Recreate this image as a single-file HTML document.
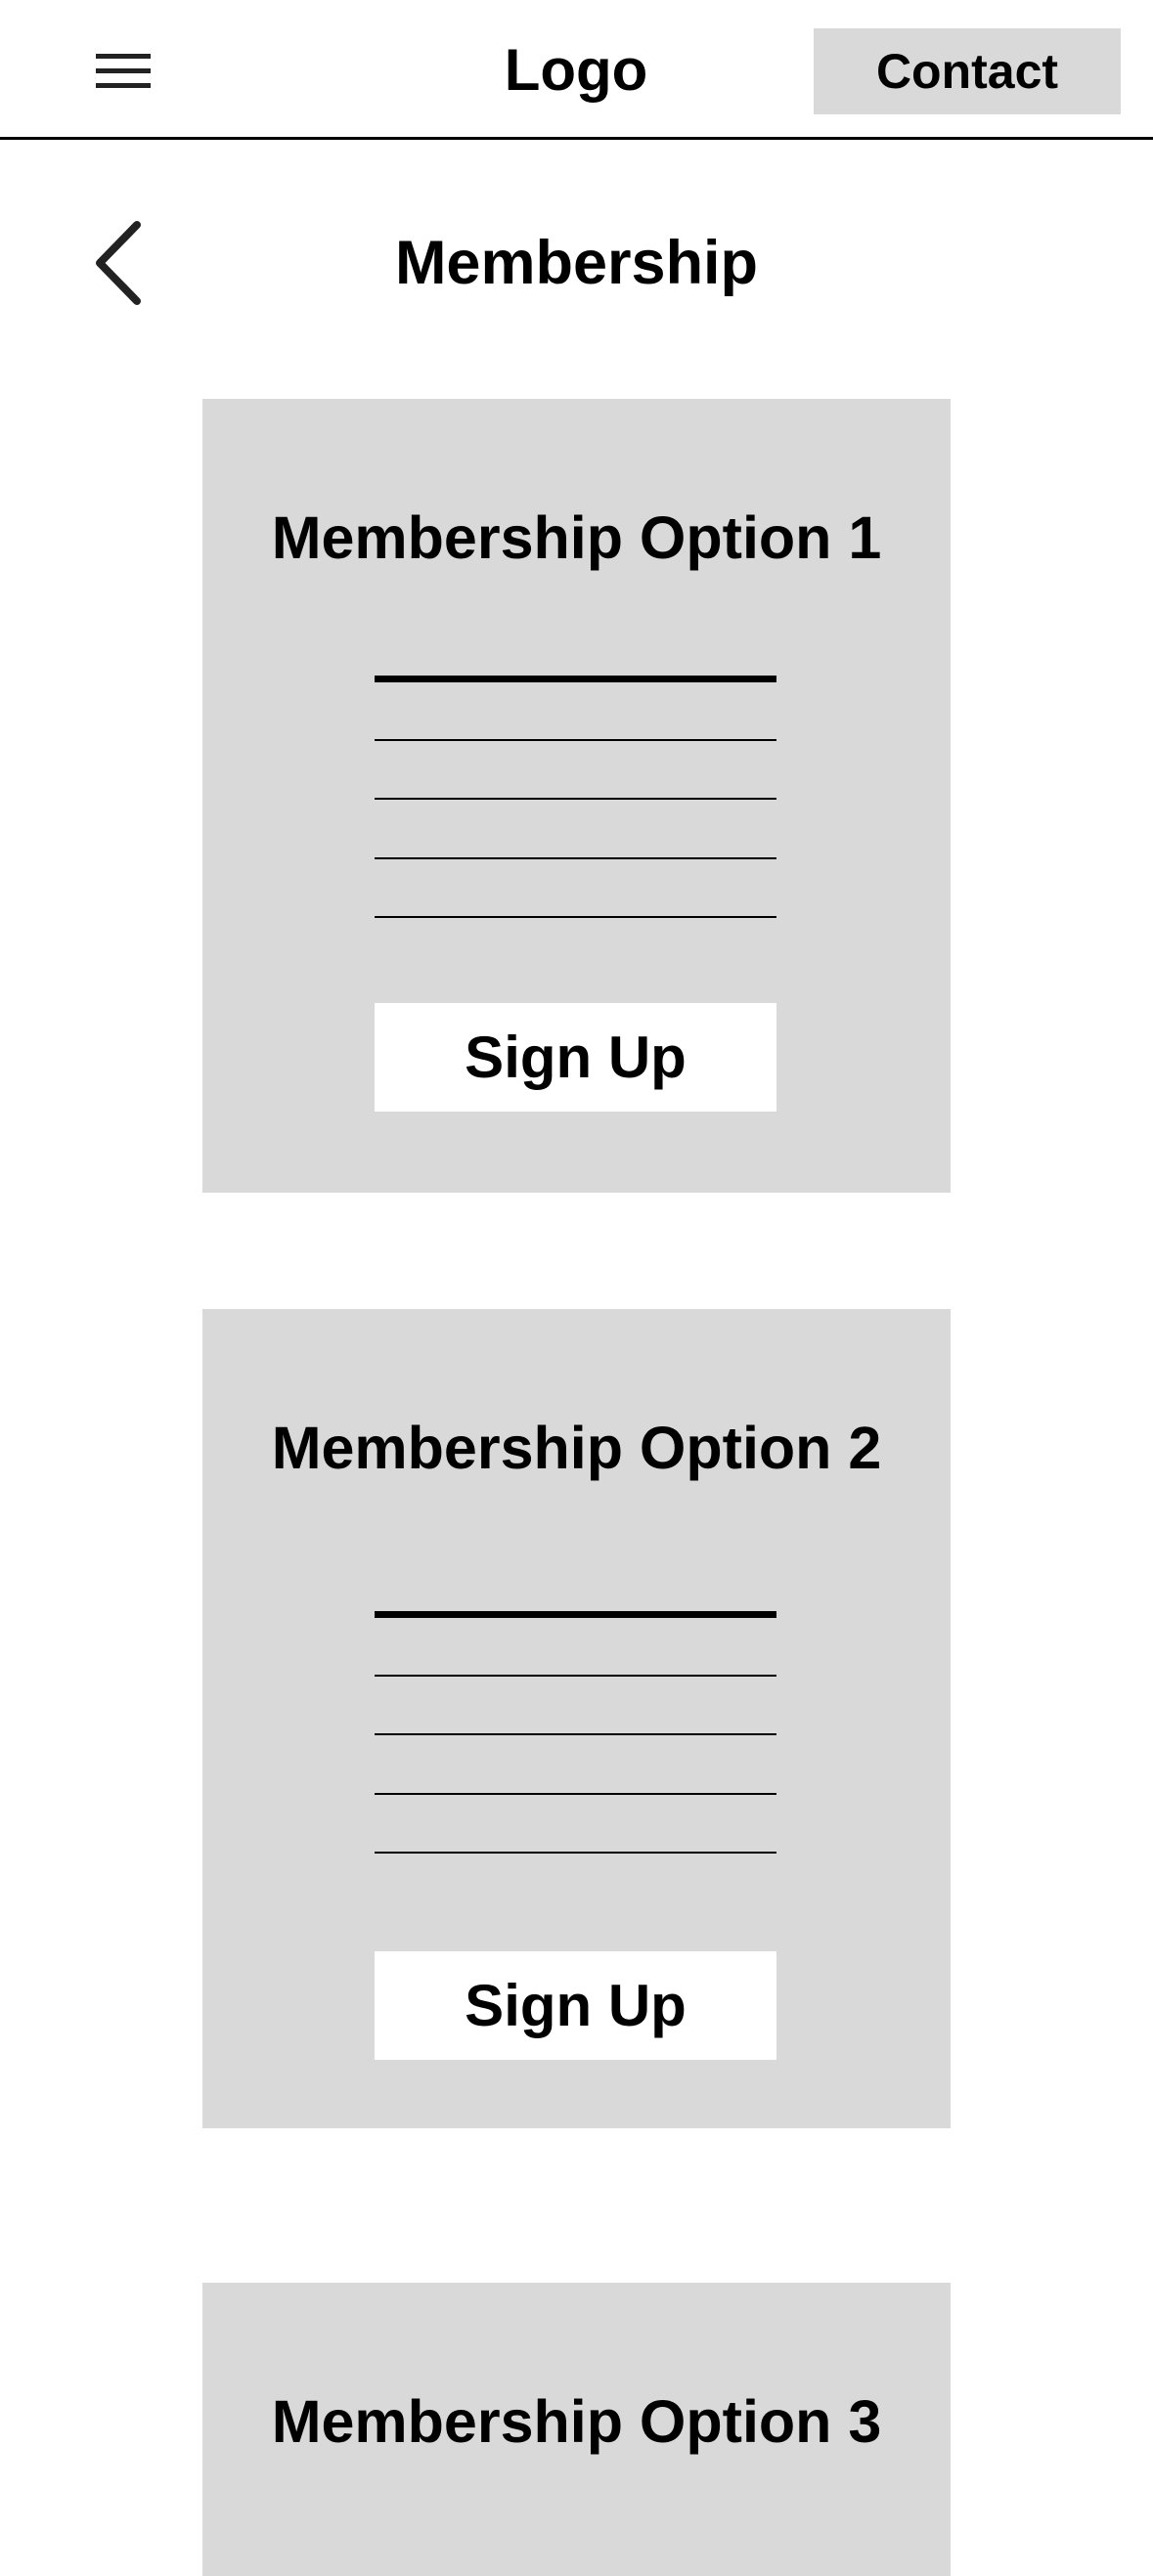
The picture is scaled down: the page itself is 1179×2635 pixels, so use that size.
<!DOCTYPE html>
<html><head><meta charset="utf-8"><style>
*{margin:0;padding:0;box-sizing:border-box}
body{width:1179px;height:2556px;background:#fff;position:relative;overflow:hidden;font-family:"Liberation Sans",Arial,sans-serif;font-weight:bold;color:#000}
.a{position:absolute}
.t{position:absolute;left:0;width:100%;text-align:center;line-height:1}
.card{position:absolute;left:207px;width:765px;background:#d9d9d9}
.ln{position:absolute;left:176px;width:411px;height:2px;background:#000}
.th{height:7px}
.btn{position:absolute;left:176px;width:411px;height:111px;background:#fff;font-size:60px;line-height:111px;text-align:center}
</style></head><body>
<div class="a" style="left:98px;top:55px;width:56px;height:5px;background:#222"></div>
<div class="a" style="left:98px;top:70px;width:56px;height:5px;background:#222"></div>
<div class="a" style="left:98px;top:85px;width:56px;height:5px;background:#222"></div>
<div class="a" style="left:480px;top:38px;width:218px;text-align:center;font-size:60px;line-height:68px">Logo</div>
<div class="a" style="left:832px;top:29px;width:314px;height:88px;background:#d9d9d9;font-size:50px;line-height:88px;text-align:center">Contact</div>
<div class="a" style="left:0;top:140px;width:1179px;height:3px;background:#000"></div>
<svg class="a" style="left:90px;top:222px" width="60" height="95"><path d="M50 8 L12 47 L50 86" stroke="#222" stroke-width="8" fill="none" stroke-linecap="round" stroke-linejoin="round"/></svg>
<div class="a" style="left:0;width:1179px;top:234px;text-align:center;font-size:63px;line-height:70px">Membership</div>

<div class="card" style="top:408px;height:812px">
<div class="t" style="top:112px;font-size:61px">Membership Option 1</div>
<div class="ln th" style="top:283px"></div>
<div class="ln" style="top:348px"></div>
<div class="ln" style="top:408px"></div>
<div class="ln" style="top:469px"></div>
<div class="ln" style="top:529px"></div>
<div class="btn" style="top:618px">Sign Up</div>
</div>

<div class="card" style="top:1339px;height:838px">
<div class="t" style="top:112px;font-size:61px">Membership Option 2</div>
<div class="ln th" style="top:309px"></div>
<div class="ln" style="top:374px"></div>
<div class="ln" style="top:434px"></div>
<div class="ln" style="top:495px"></div>
<div class="ln" style="top:555px"></div>
<div class="btn" style="top:657px">Sign Up</div>
</div>

<div class="card" style="top:2335px;height:300px">
<div class="t" style="top:112px;font-size:61px">Membership Option 3</div>
</div>
</body></html>
